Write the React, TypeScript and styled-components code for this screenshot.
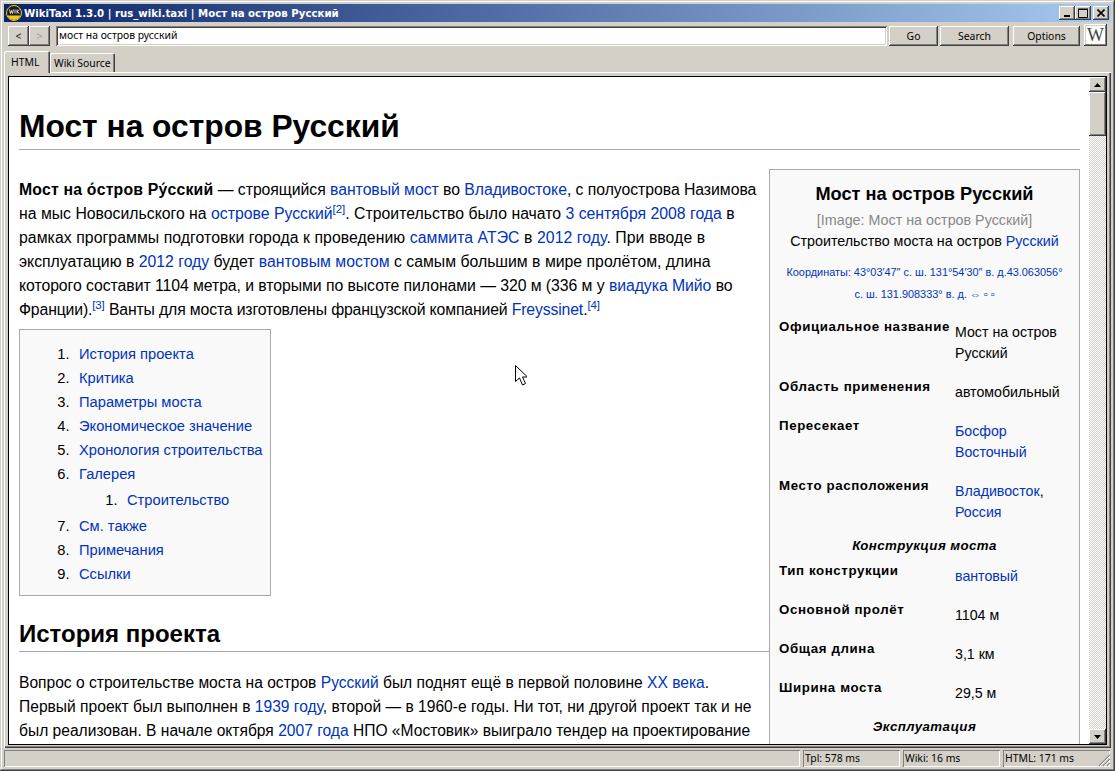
import React from "react";
import styled, { createGlobalStyle } from "styled-components";

const Global = createGlobalStyle`
  html, body { margin: 0; padding: 0; background: #d4d0c8; }
  * { box-sizing: border-box; }
`;

const raised = `box-shadow: inset -1px -1px 0 #404040, inset 1px 1px 0 #fff, inset -2px -2px 0 #808080;`;
const sunken = `box-shadow: inset 1px 1px 0 #808080, inset -1px -1px 0 #fff, inset 2px 2px 0 #404040, inset -2px -2px 0 #d4d0c8;`;
const ui = `font-family: "Noto Sans", sans-serif; font-size: 10.4px; color: #000;`;

const Window = styled.div`
  position: relative;
  width: 1115px;
  height: 771px;
  overflow: hidden;
  background: #d4d0c8;
  padding: 4px;
  display: flex;
  flex-direction: column;
  box-shadow: inset -1px -1px 0 #404040, inset 1px 1px 0 #d4d0c8, inset -2px -2px 0 #808080, inset 2px 2px 0 #fff;
`;
const TitleBar = styled.div`
  height: 18px;
  flex: none;
  display: flex;
  align-items: center;
  padding: 0 2px 0 2px;
  background: linear-gradient(90deg, #0a246a, #a6caf0);
`;
const TitleText = styled.div`
  flex: 1;
  margin-left: 2px;
  color: #fff;
  font: bold 10.2px "DejaVu Sans", sans-serif;
  white-space: nowrap;
`;
const CaptionButton = styled.div<{ $gap?: number }>`
  width: 16px;
  height: 14px;
  margin-left: ${(p) => p.$gap ?? 0}px;
  background: #d4d0c8;
  display: flex;
  align-items: center;
  justify-content: center;
  ${raised}
`;
const Toolbar = styled.div`
  height: 28px;
  flex: none;
  display: flex;
  align-items: center;
  padding-left: 4px;
`;
const Btn = styled.button<{ $w: number; $gap?: number; $off?: boolean }>`
  width: ${(p) => p.$w}px;
  height: 20px;
  flex: none;
  margin-left: ${(p) => p.$gap ?? 0}px;
  padding: 0;
  border: 0;
  background: #d4d0c8;
  ${ui}
  color: ${(p) => (p.$off ? "#a09c94" : "#000")};
  ${raised}
`;
const Address = styled.div`
  width: 831px;
  height: 20px;
  flex: none;
  margin-left: 6px;
  padding: 2px 0 0 3px;
  background: #fff;
  line-height: 15px;
  white-space: nowrap;
  ${ui}
  ${sunken}
`;
const WikiBtn = styled.div`
  width: 23px;
  height: 22px;
  margin-left: 4px;
  margin-top: -2px;
  padding: 2px;
  background: #d4d0c8;
  ${raised}
  display: flex;
`;
const WikiFace = styled.div`
  flex: 1;
  background: #fff;
  color: #444;
  font: 18px/18px "Liberation Serif", serif;
  text-align: center;
`;
const TabRow = styled.div`
  height: 22px;
  flex: none;
  display: flex;
  align-items: flex-end;
  position: relative;
  z-index: 1;
`;
const Tab = styled.div<{ $active?: boolean }>`
  ${ui}
  height: ${(p) => (p.$active ? 22 : 19)}px;
  width: ${(p) => (p.$active ? 46 : 65)}px;
  margin-bottom: ${(p) => (p.$active ? -1 : 0)}px;
  padding: ${(p) => (p.$active ? "4px 0 0 7px" : "3px 0 0 4px")};
  background: #d4d0c8;
  border-radius: 2px 2px 0 0;
  white-space: nowrap;
  box-shadow: inset 1px 1px 0 #fff, inset -1px 0 0 #404040, inset -2px 0 0 #808080;
`;
const Panel = styled.div`
  flex: 1;
  min-height: 0;
  display: flex;
  padding: 4px 4px 3px 4px;
  box-shadow: inset 1px 1px 0 #fff, inset -1px -1px 0 #404040, inset -2px -2px 0 #808080;
`;
const Frame = styled.div`
  flex: 1;
  min-width: 0;
  display: flex;
  background: #fff;
  border: 1px solid #000;
`;
const Page = styled.div`
  flex: 1;
  min-width: 0;
  overflow: hidden;
  padding: 0 9px 0 10px;
  font: 15.8px/24px "Liberation Sans", sans-serif;
  color: #000;
  white-space: nowrap;
`;
const H1 = styled.h1`
  margin: 0 0 14px;
  padding-top: 28px;
  height: 73px;
  font: bold 31.75px/42px "Liberation Sans", sans-serif;
  border-bottom: 1px solid #aaa;
`;
const Infobox = styled.aside`
  float: right;
  width: 311px;
  margin-left: 12px;
  margin-top: 5px;
  padding: 12px 9px;
  background: #f9f9f9;
  border: 1px solid #aaa;
  height: 700px;
`;
const BoxTitle = styled.div`
  text-align: center;
  margin-bottom: 4px;
  font: bold 18.2px/24px "Liberation Sans", sans-serif;
`;
const BoxCaption = styled.div<{ $gray?: boolean }>`
  text-align: center;
  font-size: 14.3px;
  line-height: 21px;
  color: ${(p) => (p.$gray ? "#888" : "#000")};
`;
const Coords = styled.div`
  text-align: center;
  margin: 9px 0 11px;
  font-size: 10.9px;
  line-height: 22px;
  color: #0033bb;
`;
const Row = styled.div<{ $h: number }>`
  display: grid;
  grid-template-columns: 176px 1fr;
  min-height: ${(p) => p.$h}px;
`;
const Label = styled.div`
  font: bold 13.3px/21px "Liberation Sans", sans-serif;
  letter-spacing: 0.6px;
`;
const Value = styled.div`
  font-size: 14.2px;
  line-height: 21px;
  padding-top: 6px;
`;
const SubHead = styled.div`
  text-align: center;
  margin-bottom: 4px;
  font: italic bold 13.3px/21px "Liberation Sans", sans-serif;
  letter-spacing: 0.4px;
`;
const Link = styled.a`
  color: #0033bb;
  text-decoration: none;
`;
const Sup = styled.sup`
  font-size: 11.5px;
  line-height: 0;
  color: #0033bb;
`;
const Intro = styled.div`
  padding-top: 14px;
`;
const Line = styled.span<{ $ls?: number }>`
  display: block;
  letter-spacing: ${(p) => p.$ls ?? 0}px;
`;
const Lead = styled.b`
  letter-spacing: 0.2px;
`;
const Para = styled.div`
  font-size: 15.6px;
`;
const Toc = styled.ol`
  width: 252px;
  height: 267px;
  margin: 7px 0 12px;
  padding: 12px 0 0 59px;
  list-style: decimal;
  background: #f9f9f9;
  border: 1px solid #aaa;
  font-size: 14.7px;

  li::marker {
    content: counter(list-item) ".\\00a0\\00a0\\200a";
  }
`;
const SubToc = styled.ol`
  margin: 2px 0 2px;
  padding: 0 0 0 48px;
`;
const H2 = styled.h2`
  margin: 0 0 19px;
  height: 44px;
  padding-top: 10px;
  font: bold 24px/32px "Liberation Sans", sans-serif;
  border-bottom: 1px solid #aaa;
`;
const ScrollBar = styled.div`
  width: 17px;
  flex: none;
  display: flex;
  flex-direction: column;
  background-color: #fff;
  background-image: conic-gradient(#d4d0c8 25%, #fff 0 50%, #d4d0c8 0 75%, #fff 0);
  background-size: 2px 2px;
`;
const ScrollBtn = styled.div`
  height: 15px;
  flex: none;
  background: #d4d0c8;
  display: flex;
  align-items: center;
  justify-content: center;
  ${raised}
`;
const Thumb = styled.div`
  height: 44px;
  flex: none;
  background: #d4d0c8;
  ${raised}
`;
const Spacer = styled.div`
  flex: 1;
`;
const Status = styled.div`
  height: 19px;
  flex: none;
  display: flex;
  gap: 3px;
  padding: 2px 1px 0 0;
  position: relative;
`;
const Cell = styled.div<{ $w?: number }>`
  ${ui}
  height: 17px;
  flex: ${(p) => (p.$w ? `0 0 ${p.$w}px` : "1")};
  padding: 1px 0 0 2px;
  white-space: nowrap;
  box-shadow: inset 1px 1px 0 #808080, inset -1px -1px 0 #fff;
`;
const Grip = styled.svg`
  position: absolute;
  right: 0;
  bottom: 0;
`;
const Cursor = styled.svg`
  position: absolute;
  left: 515px;
  top: 365px;
`;

const Arrow = ({ up }: { up?: boolean }) => (
  <svg width="7" height="4" viewBox="0 0 7 4">
    <path d={up ? "M3.5 0 7 4H0z" : "M0 0h7L3.5 4z"} fill="#000" />
  </svg>
);

export default function App() {
  return (
    <Window>
      <Global />
      <TitleBar>
        <svg width="16" height="16" viewBox="0 0 16 16">
          <circle cx="8" cy="8" r="7.5" fill="#1c1c1c" />
          <path d="M1.5 10.500h13a7 7 0 0 1-13 0z" fill="#f2c81e" />
          <circle cx="8" cy="8" r="7.5" fill="none" stroke="#f2c81e" strokeWidth="1" />
          <path d="M3.500 4.500l1 4 1-3 1 3 1-4M9 4.500v4M11 4.500v4M13.500 4.500l-2.500 2 2.500 2" fill="none" stroke="#fff" strokeWidth="0.8" />
        </svg>
        <TitleText>WikiTaxi 1.3.0 | rus_wiki.taxi | Мост на остров Русский</TitleText>
        <CaptionButton>
          <svg width="8" height="8" viewBox="0 0 8 8"><path d="M1 6h6v2H1z" fill="#000" /></svg>
        </CaptionButton>
        <CaptionButton>
          <svg width="10" height="10" viewBox="0 0 10 10"><path d="M.5 1.500h9v8h-9zM0 1h10" fill="none" stroke="#000" /></svg>
        </CaptionButton>
        <CaptionButton $gap={2}>
          <svg width="8" height="8" viewBox="0 0 8 8"><path d="M.5.5l7 7M7.500.5l-7 7" stroke="#000" strokeWidth="1.6" fill="none" /></svg>
        </CaptionButton>
      </TitleBar>
      <Toolbar>
        <Btn $w={21}>&lt;</Btn>
        <Btn $w={21} $off>&gt;</Btn>
        <Address>мост на остров русский</Address>
        <Btn $w={49} $gap={2}>Go</Btn>
        <Btn $w={69} $gap={2}>Search</Btn>
        <Btn $w={67} $gap={4}>Options</Btn>
        <WikiBtn><WikiFace>W</WikiFace></WikiBtn>
      </Toolbar>
      <TabRow>
        <Tab $active>HTML</Tab>
        <Tab>Wiki Source</Tab>
      </TabRow>
      <Panel>
        <Frame>
          <Page>
            <H1>Мост на остров Русский</H1>
            <Infobox>
              <BoxTitle>Мост на остров Русский</BoxTitle>
              <BoxCaption $gray>[Image: Мост на остров Русский]</BoxCaption>
              <BoxCaption>Строительство моста на остров <Link>Русский</Link></BoxCaption>
              <Coords>Координаты: 43°03′47″ с. ш. 131°54′30″ в. д.43.063056°<br />с. ш. 131.908333° в. д. ⇔ ▫ ▫</Coords>
              <Row $h={60}><Label>Официальное название</Label><Value>Мост на остров<br />Русский</Value></Row>
              <Row $h={39}><Label>Область применения</Label><Value>автомобильный</Value></Row>
              <Row $h={60}><Label>Пересекает</Label><Value><Link>Босфор</Link><br /><Link>Восточный</Link></Value></Row>
              <Row $h={60}><Label>Место расположения</Label><Value><Link>Владивосток</Link>,<br /><Link>Россия</Link></Value></Row>
              <SubHead>Конструкция моста</SubHead>
              <Row $h={39}><Label>Тип конструкции</Label><Value><Link>вантовый</Link></Value></Row>
              <Row $h={39}><Label>Основной пролёт</Label><Value>1104 м</Value></Row>
              <Row $h={39}><Label>Общая длина</Label><Value>3,1 км</Value></Row>
              <Row $h={39}><Label>Ширина моста</Label><Value>29,5 м</Value></Row>
              <SubHead>Эксплуатация</SubHead>
            </Infobox>
            <Intro>
              <Line $ls={-0.05}><Lead>Мост на о́стров Ру́сский</Lead> — строящийся <Link>вантовый мост</Link> во <Link>Владивостоке</Link>, с полуострова Назимова</Line>
              <Line>на мыс Новосильского на <Link>острове Русский</Link><Sup>[2]</Sup>. Строительство было начато <Link>3 сентября 2008 года</Link> в</Line>
              <Line $ls={0.06}>рамках программы подготовки города к проведению <Link>саммита АТЭС</Link> в <Link>2012 году</Link>. При вводе в</Line>
              <Line>эксплуатацию в <Link>2012 году</Link> будет <Link>вантовым мостом</Link> с самым большим в мире пролётом, длина</Line>
              <Line $ls={-0.06}>которого составит 1104 метра, и вторыми по высоте пилонами — 320 м (336 м у <Link>виадука Мийо</Link> во</Line>
              <Line $ls={-0.15}>Франции).<Sup>[3]</Sup> Ванты для моста изготовлены французской компанией <Link>Freyssinet</Link>.<Sup>[4]</Sup></Line>
            </Intro>
            <Toc>
              <li><Link>История проекта</Link></li>
              <li><Link>Критика</Link></li>
              <li><Link>Параметры моста</Link></li>
              <li><Link>Экономическое значение</Link></li>
              <li><Link>Хронология строительства</Link></li>
              <li><Link>Галерея</Link>
                <SubToc><li><Link>Строительство</Link></li></SubToc>
              </li>
              <li><Link>См. также</Link></li>
              <li><Link>Примечания</Link></li>
              <li><Link>Ссылки</Link></li>
            </Toc>
            <H2>История проекта</H2>
            <Para>
              Вопрос о строительстве моста на остров <Link>Русский</Link> был поднят ещё в первой половине <Link>XX века</Link>.<br />
              Первый проект был выполнен в <Link>1939 году</Link>, второй — в 1960-е годы. Ни тот, ни другой проект так и не<br />
              был реализован. В начале октября <Link>2007 года</Link> НПО «Мостовик» выиграло тендер на проектирование
            </Para>
          </Page>
          <ScrollBar>
            <ScrollBtn><Arrow up /></ScrollBtn>
            <Thumb />
            <Spacer />
            <ScrollBtn><Arrow /></ScrollBtn>
          </ScrollBar>
        </Frame>
      </Panel>
      <Status>
        <Cell />
        <Cell $w={97}>Tpl: 578 ms</Cell>
        <Cell $w={97}>Wiki: 16 ms</Cell>
        <Cell $w={107}>HTML: 171 ms</Cell>
        <Grip width="13" height="13" viewBox="0 0 13 13">
          <path d="M12 1 1 12M12 5 5 12M12 9 9 12" stroke="#808080" strokeWidth="1.2" fill="none" />
          <path d="M12 2 2 12M12 6 6 12M12 10 10 12" stroke="#fff" strokeWidth="1" fill="none" />
        </Grip>
      </Status>
      <Cursor width="12" height="21" viewBox="0 0 12 21">
        <path d="M.5.5v16l4-3.500 3 7 3-1.500-3-6.500h5z" fill="#fff" stroke="#000" strokeWidth="1" />
      </Cursor>
    </Window>
  );
}
